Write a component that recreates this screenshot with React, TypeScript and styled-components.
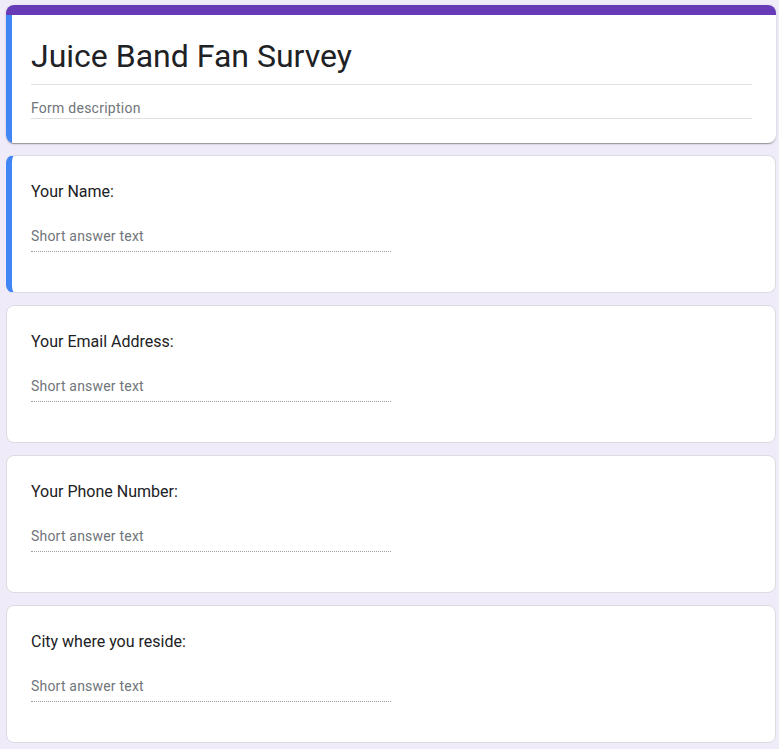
import React from "react";
import styled, { createGlobalStyle } from "styled-components";

const GlobalStyle = createGlobalStyle`
  html, body {
    margin: 0;
    padding: 0;
    background: #f0ebf8;
  }
  body {
    font-family: Roboto, "Noto Sans", Arial, sans-serif;
    color: #202124;
  }
`;

const Page = styled.main`
  display: flex;
  flex-direction: column;
  gap: 12px;
  padding: 5px 3px 8px 6px;
  width: 770px;
  box-sizing: content-box;
`;

const HeaderCard = styled.section`
  display: flex;
  flex-direction: column;
  border-radius: 8px;
  overflow: hidden;
  background: #fff;
  box-shadow: 0 2px 1px -1px rgba(0, 0, 0, 0.2), 0 1px 1px 0 rgba(0, 0, 0, 0.14),
    0 1px 3px 0 rgba(0, 0, 0, 0.12);
`;

const PurpleBand = styled.div`
  height: 10px;
  background: #673ab7;
`;

const HeaderBody = styled.div`
  border-left: 6px solid #4285f4;
  padding: 21px 24px 24px 19px;
  display: flex;
  flex-direction: column;
`;

const Title = styled.h1`
  margin: 0;
  font-size: 32px;
  line-height: 40px;
  font-weight: 400;
  color: #202124;
  padding-bottom: 8px;
  border-bottom: 1px solid #e0e0e0;
`;

const Description = styled.div`
  margin-top: 13px;
  font-size: 14px;
  line-height: 20px;
  letter-spacing: 0.25px;
  color: #70757a;
  border-bottom: 1px solid #e0e0e0;
`;

const QuestionCard = styled.section<{ $active?: boolean }>`
  display: flex;
  flex-direction: column;
  box-sizing: border-box;
  height: 138px;
  background: #fff;
  border: 1px solid #dadce0;
  border-radius: 8px;
  padding: 24px 24px 0 ${(p) => (p.$active ? "19px" : "24px")};
  border-left: ${(p) => (p.$active ? "6px solid #4285f4" : "1px solid #dadce0")};
`;

const Label = styled.div`
  font-size: 16px;
  line-height: 24px;
  color: #202124;
`;

const AnswerField = styled.div`
  margin-top: 22px;
  width: 360px;
  padding-bottom: 5px;
  font-size: 14px;
  line-height: 20px;
  letter-spacing: 0.2px;
  color: #70757a;
  border-bottom: 1px dotted #9aa0a6;
`;

const questions = [
  "Your Name:",
  "Your Email Address:",
  "Your Phone Number:",
  "City where you reside:",
];

export default function App() {
  return (
    <>
      <GlobalStyle />
      <Page>
        <HeaderCard>
          <PurpleBand />
          <HeaderBody>
            <Title>Juice Band Fan Survey</Title>
            <Description>Form description</Description>
          </HeaderBody>
        </HeaderCard>
        {questions.map((q, i) => (
          <QuestionCard key={q} $active={i === 0}>
            <Label>{q}</Label>
            <AnswerField>Short answer text</AnswerField>
          </QuestionCard>
        ))}
      </Page>
    </>
  );
}
